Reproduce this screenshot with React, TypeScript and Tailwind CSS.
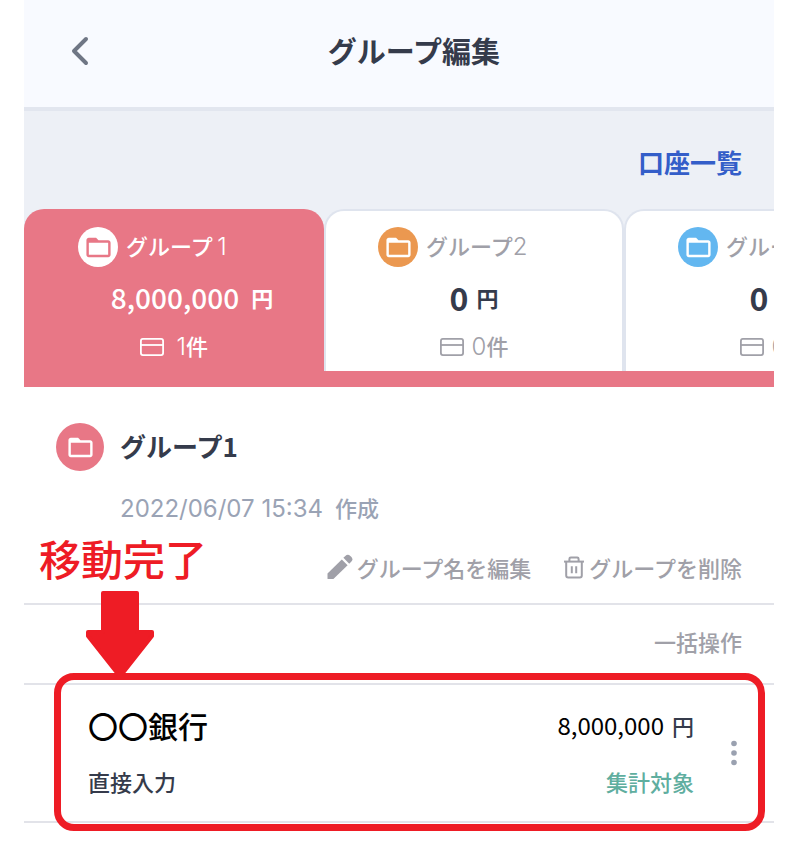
import { MdFolderOpen } from "react-icons/md";

type Group = {
  name: string;
  number: string;
  amount: string;
  count: string;
  badge: string;
};

const groups: Group[] = [
  { name: "グループ", number: "1", amount: "8,000,000", count: "1", badge: "bg-white text-[#e87786]" },
  { name: "グループ", number: "2", amount: "0", count: "0", badge: "bg-[#eb9850] text-white" },
  { name: "グループ", number: "3", amount: "0", count: "0", badge: "bg-[#63b7f0] text-white" },
];

const CardIcon: React.FC = () => (
  <svg width="24" height="18" viewBox="0 0 24 18" fill="none" stroke="currentColor" strokeWidth="1.8">
    <rect x="0.9" y="0.9" width="22.2" height="16.2" rx="2" />
    <path d="M1 7h22" />
  </svg>
);

const PencilIcon: React.FC = () => (
  <svg width="26" height="26" viewBox="0 0 26 26" fill="currentColor">
    <path d="M0.5 24.4v-5L14.8 5.4l5.8 5.9L6.4 24.9H1a.5.5 0 0 1-.5-.5z" />
    <path d="M16.4 3.8l1.9-1.9a3.6 3.6 0 0 1 5 0l.9.9a3.6 3.6 0 0 1 0 5l-2 1.9z" />
  </svg>
);

const TrashIcon: React.FC = () => (
  <svg width="22" height="24" viewBox="0 0 22 24" fill="none" stroke="currentColor" strokeWidth="2">
    <path d="M1 6.6h20" />
    <path d="M6.4 6.6V4c0-.9.6-1.4 1.4-1.4h6.4c.8 0 1.4.5 1.4 1.4v2.6" />
    <path d="M3.2 6.6v14c0 1.2.8 2 2 2h11.6c1.2 0 2-.8 2-2v-14" />
    <path d="M8.8 11.2v7M13.2 11.2v7" />
  </svg>
);

const Digit: React.FC<{ value: string }> = ({ value }) => (
  <span className="inline-block min-w-3.5 text-right font-['Inter'] text-[24px] font-light">{value}</span>
);

const GroupTab: React.FC<{ group: Group; active: boolean }> = ({ group, active }) => (
  <button
    className={
      active
        ? "flex w-2/5 shrink-0 flex-col items-center rounded-t-[20px] bg-[#e87786] pt-[18px] text-white"
        : "flex w-2/5 shrink-0 flex-col items-center rounded-t-[20px] border-2 border-b-0 border-[#dfe4ee] bg-white pt-4 text-[#a0a0a8]"
    }
  >
    <span className="flex w-48 items-center gap-2">
      <span className={`flex size-10 shrink-0 items-center justify-center rounded-full ${group.badge}`}>
        <MdFolderOpen size={29} />
      </span>
      <span className="text-[22px] font-medium whitespace-nowrap">
        {group.name}
        <Digit value={group.number} />
      </span>
    </span>
    <span
      className={
        active
          ? "mt-2.5 flex h-10 items-center gap-3 pl-9 text-[28px] font-medium"
          : "mt-2.5 flex h-10 items-center gap-2 text-[32px] font-bold text-[#353b4b]"
      }
    >
      {group.amount}
      <span className="text-[22px] font-bold">円</span>
    </span>
    <span className="mt-3.5 flex h-8 items-center gap-2 text-[22px] font-medium">
      <CardIcon />
      <span>
        <Digit value={group.count} />件
      </span>
    </span>
  </button>
);

const Annotation: React.FC = () => (
  <div className="pointer-events-none absolute -top-[12px] right-[9px] -bottom-[10px] left-[30px] rounded-[20px] border-[7px] border-[#ee1c25]">
    <p className="absolute -top-[152px] -left-[22px] text-[42px] leading-[60px] font-medium whitespace-nowrap text-[#ee1c25]">
      移動完了
    </p>
    <svg
      className="absolute -top-[89px] left-[25px]"
      width="68"
      height="87"
      viewBox="0 0 68 87"
      fill="#ee1c25"
      stroke="#ee1c25"
      strokeWidth="4"
      strokeLinejoin="round"
    >
      <path d="M17 2h34v39h15v4L36 83h-4L2 45v-4h15z" />
    </svg>
  </div>
);

const App: React.FC = () => {
  return (
    <main className="overflow-hidden bg-white pr-[26px] pb-7 pl-6 font-['Noto_Sans_CJK_JP',sans-serif] text-[#353b4b]">
      <header className="flex h-[111px] items-center border-b-4 border-[#e2e6ef] bg-[#f8faff] pr-[50px] pb-1.5 pl-8">
        <button aria-label="戻る" className="flex size-12 items-center justify-center text-[#6f7685]">
          <svg width="18" height="30" viewBox="0 0 18 30" fill="none" stroke="currentColor" strokeWidth="4" strokeLinecap="round" strokeLinejoin="round">
            <path d="M15 3L3 15l12 12" />
          </svg>
        </button>
        <h1 className="flex-1 text-center text-[29px] font-bold">グループ編集</h1>
      </header>

      <section className="bg-[#edf0f6]">
        <div className="flex h-[98px] items-center justify-end px-8">
          <a href="#accounts" className="pt-0.5 text-[26px] font-bold text-[#345ec9]">
            口座一覧
          </a>
        </div>
        <div className="flex h-[162px] overflow-hidden">
          {groups.map((group, index) => (
            <GroupTab key={index} group={group} active={index === 0} />
          ))}
        </div>
        <div className="h-4 bg-[#e87786]"></div>
      </section>

      <section className="border-b-2 border-[#e2e3e9] px-8 pt-9 pb-4.5">
        <div className="flex items-center gap-4">
          <span className="flex size-12 items-center justify-center rounded-full bg-[#e87786] text-white">
            <MdFolderOpen size={29} />
          </span>
          <h2 className="pb-1 text-[26px] font-bold">グループ1</h2>
        </div>
        <p className="mt-4.5 flex items-baseline gap-3 pl-16 text-[22px] leading-9 font-medium text-[#9aa3b5]">
          <span className="font-['Inter'] text-[24px] font-normal">2022/06/07 15:34</span>
          <span>作成</span>
        </p>
        <div className="mt-5.5 flex justify-end gap-8 text-[22px] leading-9 font-medium text-[#a0a0a8]">
          <button className="flex items-center gap-1">
            <PencilIcon />
            グループ名を編集
          </button>
          <button className="flex items-center gap-1">
            <TrashIcon />
            グループを削除
          </button>
        </div>
      </section>

      <div className="flex h-20 items-center justify-end border-b-2 border-[#e2e3e9] px-8 pb-1.5">
        <button className="text-[22px] font-medium text-[#a0a0a8]">一括操作</button>
      </div>

      <section className="relative flex h-[138px] items-center border-b-2 border-[#e2e3e9] pr-7 pl-16">
        <div className="flex-1">
          <h3 className="text-[30px] leading-10 font-medium text-black">〇〇銀行</h3>
          <p className="mt-4 text-[22px] leading-10 font-medium">直接入力</p>
        </div>
        <div className="text-right">
          <p className="flex justify-end gap-2 text-[22px] leading-10 font-medium">
            <span className="text-[24px] font-normal text-black">8,000,000</span>
            <span>円</span>
          </p>
          <p className="mt-4 text-[22px] leading-10 font-medium text-[#5fae9f]">集計対象</p>
        </div>
        <button aria-label="メニュー" className="ml-7 flex w-6 flex-col items-center gap-1 text-[#9aa1b0]">
          <svg width="6" height="26" viewBox="0 0 6 26" fill="currentColor">
            <circle cx="3" cy="3.5" r="2.8" />
            <circle cx="3" cy="13" r="2.8" />
            <circle cx="3" cy="22.5" r="2.8" />
          </svg>
        </button>
        <Annotation />
      </section>
    </main>
  );
};

export default App;
